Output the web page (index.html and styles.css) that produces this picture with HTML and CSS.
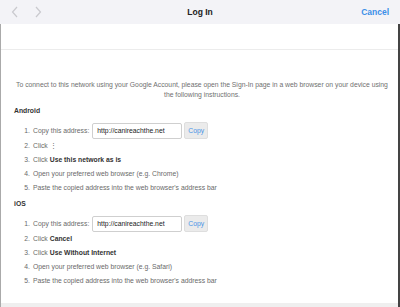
FILE: index.html
```html
<!DOCTYPE html>
<html lang="en">
<head>
	<meta charset="UTF-8">
	<title>Log In</title>
	<link rel="stylesheet" href="styles.css">
</head>
<body>
	<div class="window">
		<div class="nav">
			<div class="arrows">
				<svg width="8" height="12" viewBox="0 0 8 12"><polyline points="6,1 1.5,6 6,11" fill="none" stroke="#c9c9ce" stroke-width="1.2"/></svg>
				<svg width="8" height="12" viewBox="0 0 8 12"><polyline points="2,1 6.5,6 2,11" fill="none" stroke="#c9c9ce" stroke-width="1.2"/></svg>
			</div>
			<div class="title">Log In</div>
			<div class="cancel">Cancel</div>
		</div>
		<div class="frame">
			<div class="band"></div>
			<div class="content">
				<p class="intro">To connect to this network using your Google Account, please open the Sign-In page in a web browser on your device using the following instructions.</p>

				<div class="os">Android</div>
				<ol class="steps">
					<li class="first"><span class="num">1.</span>Copy this address:<span class="addr">http://canireachthe.net</span><span class="copy">Copy</span></li>
					<li><span class="num">2.</span>Click &#8942;</li>
					<li><span class="num">3.</span>Click <b>Use this network as is</b></li>
					<li><span class="num">4.</span>Open your preferred web browser (e.g. Chrome)</li>
					<li><span class="num">5.</span>Paste the copied address into the web browser's address bar</li>
				</ol>

				<div class="os">iOS</div>
				<ol class="steps">
					<li class="first"><span class="num">1.</span>Copy this address:<span class="addr">http://canireachthe.net</span><span class="copy">Copy</span></li>
					<li><span class="num">2.</span>Click <b>Cancel</b></li>
					<li><span class="num">3.</span>Click <b>Use Without Internet</b></li>
					<li><span class="num">4.</span>Open your preferred web browser (e.g. Safari)</li>
					<li><span class="num">5.</span>Paste the copied address into the web browser's address bar</li>
				</ol>
			</div>
			<div class="foot"></div>
		</div>
	</div>
</body>
</html>
```

FILE: styles.css
```css
* { margin: 0; padding: 0; box-sizing: border-box; }
body {
	background-color: #fff;
	font-family: "Liberation Sans", Arial, sans-serif;
}
.window {
	width: 400px;
	height: 307px;
	display: flex;
	flex-direction: column;
}
.nav {
	height: 24px;
	background-color: #f3f3f7;
	display: flex;
	align-items: center;
	padding: 0 11px 0 11px;
}
.arrows {
	display: flex;
	gap: 15px;
	width: 60px;
}
.title {
	flex: 1;
	text-align: center;
	font-size: 8.5px;
	font-weight: bold;
	color: #222;
	margin-left: -20px;
}
.cancel {
	width: 40px;
	text-align: right;
	font-size: 8.5px;
	font-weight: bold;
	color: #3b8fe8;
}
.frame {
	flex: 1;
	display: flex;
	flex-direction: column;
	border-left: 1px solid #aaa;
	border-right: 2px solid #444;
}
.band {
	height: 26px;
	border-bottom: 1px solid #ececec;
}
.content {
	flex: 1;
	padding: 30px 10px 0 13px;
	font-size: 6.8px;
	color: #6a6a6a;
}
.intro {
	text-align: center;
	line-height: 10px;
	color: #707070;
	padding-left: 2px;
}
.os {
	margin-top: 6px;
	line-height: 10px;
	font-weight: bold;
	color: #333;
}
.steps {
	list-style: none;
	margin-top: 6px;
}
.steps li {
	line-height: 14px;
	display: flex;
	align-items: center;
}
.steps li.first {
	height: 17px;
}
.num {
	width: 16px;
	text-align: right;
	margin-right: 3px;
}
.steps b {
	color: #333;
	margin-left: 2px;
}
.addr {
	width: 90px;
	height: 16px;
	margin-left: 3px;
	border: 1px solid #cfcfcf;
	border-radius: 2px;
	background: #fff;
	color: #222;
	padding-left: 4px;
	line-height: 14px;
}
.copy {
	width: 24px;
	height: 17px;
	margin-left: 2px;
	background: #ebebeb;
	border: 1px solid #dedede;
	border-radius: 2px;
	color: #4a94e6;
	text-align: center;
	line-height: 15px;
}
.steps + .os {
	margin-top: 4px;
}
.foot {
	height: 4px;
	background: #efefef;
}
```
